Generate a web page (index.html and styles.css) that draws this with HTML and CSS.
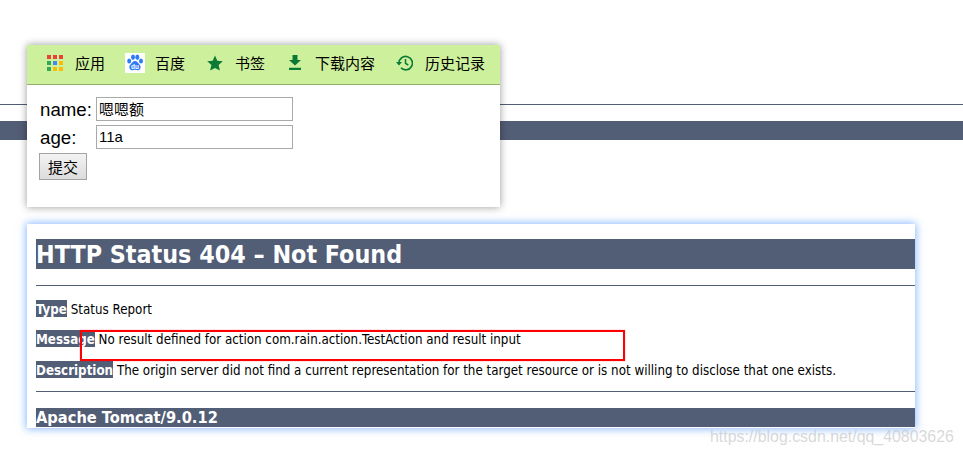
FILE: index.html
```html
<!DOCTYPE html>
<html lang="zh-CN">
<head>
    <meta charset="UTF-8">
    <meta name="viewport" content="width=device-width, initial-scale=1.0">
    <title>HTTP Status 404 – Not Found</title>
    <link rel="stylesheet" href="styles.css">
</head>
<body>
    <div class="backdrop">
        <div class="backdrop-line"></div>
        <div class="backdrop-bar"></div>
    </div>

    <div class="card form-card">
        <div class="toolbar">
            <span class="tool tool-apps">
                <svg class="icon" width="16" height="16" viewBox="0 0 16 16">
                    <rect x="0" y="0" width="4" height="4" fill="#ea4335"/>
                    <rect x="6" y="0" width="4" height="4" fill="#ea4335"/>
                    <rect x="12" y="0" width="4" height="4" fill="#ea4335"/>
                    <rect x="0" y="6" width="4" height="4" fill="#34a853"/>
                    <rect x="6" y="6" width="4" height="4" fill="#4285f4"/>
                    <rect x="12" y="6" width="4" height="4" fill="#fbbc05"/>
                    <rect x="0" y="12" width="4" height="4" fill="#34a853"/>
                    <rect x="6" y="12" width="4" height="4" fill="#fbbc05"/>
                    <rect x="12" y="12" width="4" height="4" fill="#fbbc05"/>
                </svg>
                应用
            </span>
            <span class="tool tool-baidu">
                <svg class="icon" width="20" height="20" viewBox="0 0 20 20">
                    <rect width="20" height="20" fill="#fff"/>
                    <g fill="#2f7bf5">
                        <ellipse cx="4.2" cy="8" rx="2" ry="2.6"/>
                        <ellipse cx="8" cy="4.2" rx="2" ry="2.7"/>
                        <ellipse cx="12.3" cy="4.2" rx="2" ry="2.7"/>
                        <ellipse cx="16" cy="8" rx="2" ry="2.6"/>
                        <path d="M10 8c2.2 0 3 2 4.500 3.500 1.800 1.800 1.500 5.500-1.500 5.700-1.200.1-2-.4-3-.4s-1.800.5-3 .4c-3-.2-3.300-3.900-1.500-5.700C7 10 7.800 8 10 8z"/>
                    </g>
                    <text class="du" x="10" y="16.400" text-anchor="middle">du</text>
                </svg>
                百度
            </span>
            <span class="tool tool-star">
                <svg class="icon" width="16" height="16" viewBox="0 0 16 16">
                    <path fill="#0b7a35" d="M8 .5l2.300 5.200 5.500.5-4.200 3.700 1.300 5.500L8 12.900l-4.900 2.500 1.300-5.500L.2 6.200l5.500-.5z"/>
                </svg>
                书签
            </span>
            <span class="tool tool-down">
                <svg class="icon" width="12" height="15" viewBox="0 0 12 15">
                    <path fill="#0b7a35" d="M3.500 0h5v5H12L6 10.500 0 5h3.500zM0 12.800h12V15H0z"/>
                </svg>
                下载内容
            </span>
            <span class="tool tool-history">
                <svg class="icon" width="17" height="16" viewBox="0 0 17 16">
                    <path fill="none" stroke="#0b7a35" stroke-width="1.600" d="M3 8a6.700 6.700 0 1 1 2 4.900"/>
                    <path fill="#0b7a35" d="M0 7h6L3 10.500z"/>
                    <path fill="none" stroke="#0b7a35" stroke-width="1.500" d="M9.500 4v4.300l2.800 1.700"/>
                </svg>
                历史记录
            </span>
        </div>
        <form class="login-form">
            <label class="field-label">name:</label>
            <input class="field" type="text" value="嗯嗯额">
            <label class="field-label">age:</label>
            <input class="field" type="text" value="11a">
            <button class="submit" type="button">提交</button>
        </form>
    </div>

    <div class="card error-card">
        <h1 class="error-title">HTTP Status 404 – Not Found</h1>
        <hr class="rule rule-top">
        <p class="line"><b>Type</b> Status Report</p>
        <p class="line"><b>Message</b> No result defined for action com.rain.action.TestAction and result input</p>
        <p class="line line-last"><b>Description</b> The origin server did not find a current representation for the target resource or is not willing to disclose that one exists.</p>
        <hr class="rule rule-bottom">
        <h3 class="error-footer">Apache Tomcat/9.0.12</h3>
        <div class="highlight"></div>
    </div>

    <div class="watermark">https://blog.csdn.net/qq_40803626</div>
</body>
</html>
```

FILE: styles.css
```css
* {
    box-sizing: border-box;
}

html, body {
    margin: 0;
    padding: 0;
    height: 454px;
    overflow: hidden;
}

body {
    position: relative;
    background: #fff;
    padding-top: 45px;
    padding-left: 27px;
    font-family: "Noto Sans", "Noto Sans CJK SC", sans-serif;
    color: #000;
}

.backdrop {
    position: absolute;
    top: 104px;
    left: 0;
    width: 100%;
}

.backdrop-line {
    height: 1px;
    background-color: #525d76;
}

.backdrop-bar {
    height: 19px;
    margin-top: 16px;
    background-color: #525d76;
}

.card {
    position: relative;
    background: #fff;
}

.form-card {
    width: 473px;
    height: 162px;
    box-shadow: 0 0 8px rgba(0, 0, 0, 0.4);
}

.toolbar {
    display: flex;
    align-items: center;
    height: 40px;
    padding-left: 20px;
    padding-bottom: 4px;
    background-color: #cdf09d;
    border-bottom: 1px solid #94b06e;
    font-family: "Noto Sans CJK SC", sans-serif;
    font-size: 15px;
}

.tool {
    display: flex;
    align-items: center;
}

.tool-apps .icon { margin-right: 12px; }
.tool-baidu { margin-left: 20px; }
.tool-baidu .icon { margin-right: 10px; }
.tool-star { margin-left: 22px; }
.tool-star .icon { margin-right: 12px; }
.tool-down { margin-left: 24px; }
.tool-down .icon { margin-right: 14px; }
.tool-history { margin-left: 21px; }
.tool-history .icon { margin-right: 12px; }

.du {
    font-family: "Liberation Sans", sans-serif;
    font-size: 6.5px;
    font-weight: bold;
    fill: #fff;
}

.login-form {
    display: grid;
    grid-template-columns: 57px 197px;
    row-gap: 4px;
    align-items: center;
    padding: 12px 0 0 12px;
}

.field-label {
    padding: 1px 0 0 1px;
    font-family: "Liberation Sans", sans-serif;
    font-size: 18.7px;
}

.field {
    width: 197px;
    height: 24px;
    padding: 0 2px 1px;
    border: 1px solid #a9a9a9;
    font-family: "Liberation Sans", "Noto Sans CJK SC", sans-serif;
    font-size: 15px;
    color: #000;
    outline: none;
}

.submit {
    grid-column: 1 / 3;
    justify-self: start;
    width: 48px;
    height: 27px;
    padding: 0;
    background: linear-gradient(#f3f3f3, #dcdcdc);
    border: 1px solid #a3a3a3;
    font-family: "Noto Sans CJK SC", sans-serif;
    font-size: 15px;
    color: #000;
}

.error-card {
    width: 888px;
    height: 204px;
    margin-top: 17px;
    padding: 15px 0 0 9px;
    box-shadow: 0 0 8px 1px rgba(60, 140, 250, 0.6);
    font-family: "DejaVu Sans Condensed", "DejaVu Sans", sans-serif;
    font-stretch: condensed;
    font-size: 13.25px;
}

.error-title {
    height: 30px;
    margin: 0;
    padding: 0;
    background-color: #525d76;
    color: #fff;
    font-size: 24.8px;
    font-weight: bold;
    line-height: 31px;
}

.rule {
    height: 1px;
    margin: 0;
    border: none;
    background-color: #525d76;
}

.rule-top { margin-top: 16px; }
.rule-bottom { margin-top: 13px; }

.line {
    height: 17px;
    margin: 13px 0 0;
    line-height: 19px;
    white-space: nowrap;
}

.rule-top + .line { margin-top: 14px; }
.line-last { margin-top: 14px; }

.line b {
    display: inline-block;
    height: 17px;
    background-color: #525d76;
    color: #fff;
}

.error-footer {
    height: 19px;
    margin: 16px 0 0;
    background-color: #525d76;
    color: #fff;
    font-size: 16.3px;
    font-weight: bold;
    line-height: 20px;
}

.highlight {
    position: absolute;
    left: 53px;
    top: 106px;
    width: 545px;
    height: 31px;
    border: 2px solid #f00;
    box-shadow: 0 0 1px rgba(255, 0, 0, 0.6);
}

.watermark {
    position: absolute;
    left: 710px;
    top: 428px;
    font-family: "Liberation Sans", sans-serif;
    font-size: 15.9px;
    color: rgba(190, 190, 190, 0.6);
    white-space: nowrap;
}
```
